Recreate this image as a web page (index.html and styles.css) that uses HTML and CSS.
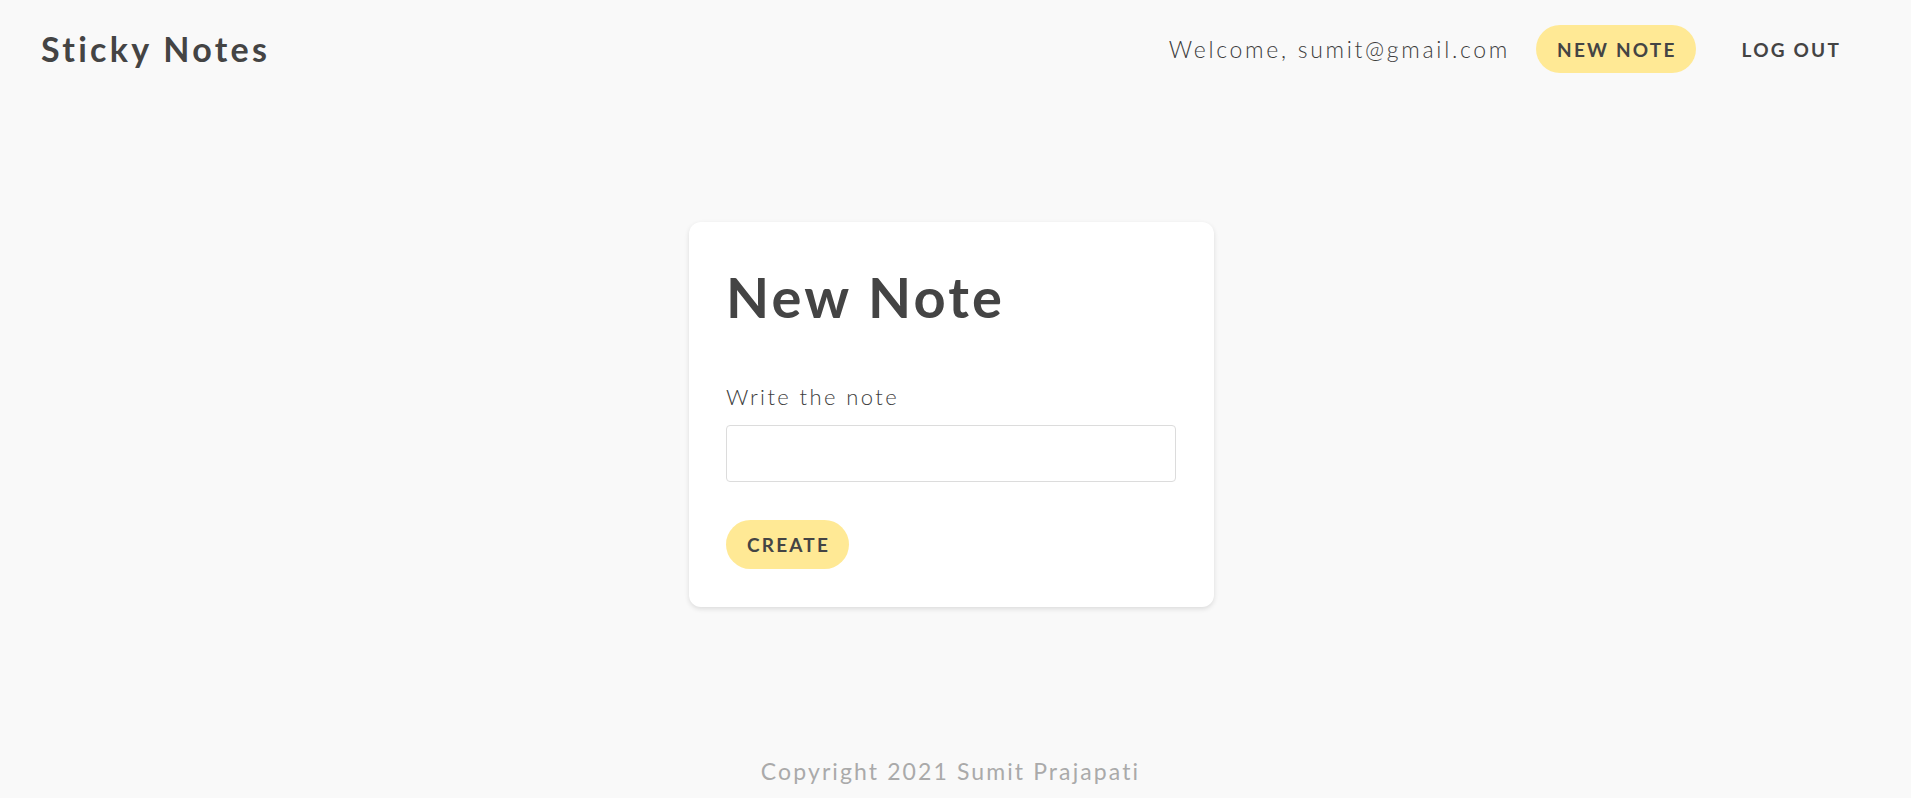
FILE: index.html
```html
<!DOCTYPE html>
<html lang="en">
<head>
<meta charset="utf-8">
<title>Sticky Notes</title>
<link rel="stylesheet" href="styles.css">
</head>
<body>
<header class="topbar">
  <div class="brand">Sticky Notes</div>
  <nav class="nav">
    <span class="welcome">Welcome, sumit@gmail.com</span>
    <button class="btn btn-yellow nav-new">NEW NOTE</button>
    <button class="btn btn-plain">LOG OUT</button>
  </nav>
</header>
<main class="main">
  <section class="card">
    <h1 class="card-title">New Note</h1>
    <label class="field-label" for="note">Write the note</label>
    <input class="field-input" id="note" type="text">
    <button class="btn btn-yellow create">CREATE</button>
  </section>
</main>
<footer class="footer">Copyright 2021 Sumit Prajapati</footer>
</body>
</html>
```

FILE: styles.css
```css
* { box-sizing: border-box; }

body {
  margin: 0;
  background: #f9f9f9;
  font-family: "Lato", "Open Sans", sans-serif;
  color: #444444;
}

.topbar {
  display: flex;
  justify-content: space-between;
  align-items: center;
  padding: 24px 51px 0 41px;
}

.brand {
  font-size: 34px;
  font-weight: 700;
  letter-spacing: 3.3px;
  line-height: 50px;
}

.nav {
  display: flex;
  align-items: center;
}

.welcome {
  font-size: 23px;
  font-weight: 300;
  letter-spacing: 2.7px;
  margin-right: 26px;
  color: #3d3d3d;
}

.btn {
  font-family: inherit;
  border: none;
  border-radius: 25px;
  height: 48px;
  padding: 0 19px 0 21px;
  font-size: 19px;
  font-weight: 700;
  letter-spacing: 2.2px;
  color: #444444;
  background: transparent;
  cursor: pointer;
}

.btn-yellow { background: #ffe995; }

.nav-new { margin-right: 25px; }

.main {
  display: flex;
  justify-content: center;
  padding: 148px 8px 0 0;
}

.card {
  width: 525px;
  background: #ffffff;
  border-radius: 12px;
  box-shadow: 0 2px 5px rgba(0, 0, 0, 0.12);
  padding: 41px 38px 38px 37px;
  display: flex;
  flex-direction: column;
  align-items: flex-start;
}

.card-title {
  margin: 0 0 54px 0;
  font-size: 56px;
  font-weight: 700;
  line-height: 1.2;
  letter-spacing: 3.2px;
}

.field-label {
  font-size: 22px;
  font-weight: 300;
  line-height: 1.2;
  letter-spacing: 2.4px;
  margin-bottom: 14px;
  color: #3d3d3d;
}

.field-input {
  width: 100%;
  height: 57px;
  border: 1px solid #dcdcdc;
  border-radius: 4px;
  background: #ffffff;
  margin-bottom: 38px;
}

.create {
  height: 49px;
}

.footer {
  text-align: center;
  padding: 0 10px 0 0;
  margin-top: 150px;
  font-size: 23px;
  font-weight: 400;
  letter-spacing: 2.1px;
  color: #aaaaaa;
}
```
